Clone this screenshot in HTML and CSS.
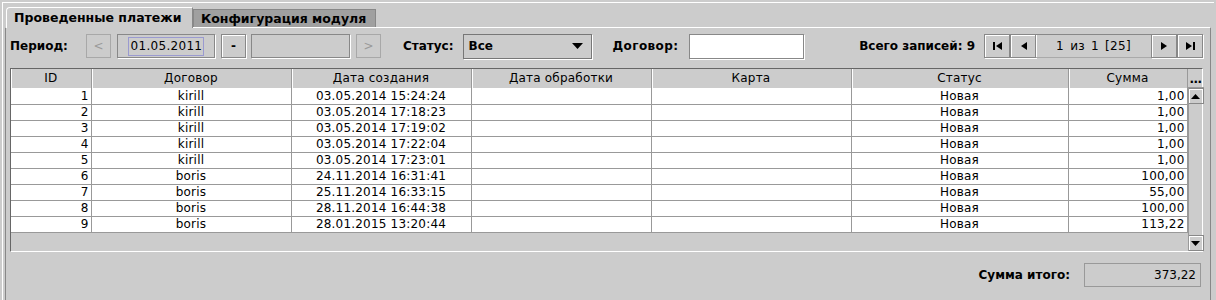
FILE: index.html
```html
<!DOCTYPE html>
<html lang="ru">
<head>
    <meta charset="UTF-8">
    <title>Проведенные платежи</title>
    <link rel="stylesheet" href="styles.css">
</head>
<body>
    <div class="window">
        <div class="tabs">
            <div class="tab active">Проведенные платежи</div>
            <div class="tab">Конфигурация модуля</div>
        </div>

        <div class="panel">
            <!-- filters -->
            <div class="toolbar">
                <span class="label">Период:</span>
                <button class="btn step prev" disabled>&lt;</button>
                <div class="field date"><span class="focus">01.05.2011</span></div>
                <button class="btn dash">-</button>
                <div class="field date-to"></div>
                <button class="btn step next" disabled>&gt;</button>

                <span class="label status-label">Статус:</span>
                <div class="select">
                    <span>Все</span>
                    <svg width="11" height="6" viewBox="0 0 11 6"><path d="M0 0h11L5.5 6z" fill="#000"/></svg>
                </div>

                <span class="label contract-label">Договор:</span>
                <input class="input" type="text">

                <span class="label total-label">Всего записей: 9</span>
                <div class="pager">
                    <button class="btn nav">
                        <svg width="9" height="8" viewBox="0 0 9 8"><path d="M0 0h2v8H0zM9 0v8L3 4z" fill="#000"/></svg>
                    </button>
                    <button class="btn nav">
                        <svg width="7" height="8" viewBox="0 0 7 8"><path d="M7 0v8L1 4z" fill="#000"/></svg>
                    </button>
                    <div class="page">1 из 1 [25]</div>
                    <button class="btn nav">
                        <svg width="7" height="8" viewBox="0 0 7 8"><path d="M0 0v8l6-4z" fill="#000"/></svg>
                    </button>
                    <button class="btn nav">
                        <svg width="9" height="8" viewBox="0 0 9 8"><path d="M0 0v8l6-4zM7 0h2v8H7z" fill="#000"/></svg>
                    </button>
                </div>
            </div>

            <!-- payments table -->
            <div class="table-box">
                <div class="grid-head">
                    <table class="grid">
                        <colgroup>
                            <col class="c-id"><col class="c-contract"><col class="c-created"><col class="c-processed">
                            <col class="c-card"><col class="c-status"><col class="c-sum">
                        </colgroup>
                        <tr>
                            <th>ID</th><th>Договор</th><th>Дата создания</th><th>Дата обработки</th>
                            <th>Карта</th><th>Статус</th><th>Сумма</th>
                        </tr>
                    </table>
                </div>
                <div class="corner">...</div>
                <div class="grid-body">
                    <table class="grid" id="rows">
                        <colgroup>
                            <col class="c-id"><col class="c-contract"><col class="c-created"><col class="c-processed">
                            <col class="c-card"><col class="c-status"><col class="c-sum">
                        </colgroup>
                    </table>
                </div>
                <div class="vscroll">
                    <div class="sbtn">
                        <svg width="9" height="5" viewBox="0 0 9 5"><path d="M0 5h9L4.5 0z" fill="#000"/></svg>
                    </div>
                    <div class="track"></div>
                    <div class="sbtn">
                        <svg width="9" height="5" viewBox="0 0 9 5"><path d="M0 0h9L4.5 5z" fill="#000"/></svg>
                    </div>
                </div>
            </div>

            <div class="summary">
                <span class="label">Сумма итого:</span>
                <div class="field total">373,22</div>
            </div>
        </div>
    </div>

    <script>
        // Payments shown in the grid
        const payments = [
            { id: 1, contract: 'kirill', created: '03.05.2014 15:24:24', sum: '1,00' },
            { id: 2, contract: 'kirill', created: '03.05.2014 17:18:23', sum: '1,00' },
            { id: 3, contract: 'kirill', created: '03.05.2014 17:19:02', sum: '1,00' },
            { id: 4, contract: 'kirill', created: '03.05.2014 17:22:04', sum: '1,00' },
            { id: 5, contract: 'kirill', created: '03.05.2014 17:23:01', sum: '1,00' },
            { id: 6, contract: 'boris', created: '24.11.2014 16:31:41', sum: '100,00' },
            { id: 7, contract: 'boris', created: '25.11.2014 16:33:15', sum: '55,00' },
            { id: 8, contract: 'boris', created: '28.11.2014 16:44:38', sum: '100,00' },
            { id: 9, contract: 'boris', created: '28.01.2015 13:20:44', sum: '113,22' }
        ];

        const table = document.getElementById('rows');
        payments.forEach(p => {
            const tr = document.createElement('tr');
            tr.innerHTML = `
                <td class="right">${p.id}</td>
                <td>${p.contract}</td>
                <td>${p.created}</td>
                <td></td>
                <td></td>
                <td>Новая</td>
                <td class="right">${p.sum}</td>
            `;
            table.appendChild(tr);
        });
    </script>
</body>
</html>
```

FILE: styles.css
```css
/* Reset */
* {
    box-sizing: border-box;
}

body {
    margin: 0;
    height: 300px;
    overflow: hidden;
    background-color: #cccccc;
    color: #000;
    font-family: "DejaVu Sans", sans-serif;
    font-size: 12px;
}

button {
    font-family: inherit;
    padding: 0;
    margin: 0;
}

.window {
    margin: 2px 2px 0 2px;
    height: 298px;
    padding: 4px 0 0 2px;
    border-top: 1px solid #fff;
    border-left: 1px solid #fff;
    display: flex;
    flex-direction: column;
}

/* Tabs */
.tabs {
    display: flex;
    align-items: flex-end;
    padding-left: 1px;
    height: 20px;
    position: relative;
    z-index: 1;
}

.tab {
    height: 18px;
    padding: 0 7px 0 7px;
    background-color: #a0a0a0;
    border: 1px solid #888;
    border-bottom: none;
    font-weight: bold;
    font-size: 12.5px;
    line-height: 17px;
    white-space: nowrap;
}

.tab.active {
    height: 21px;
    width: 187px;
    margin-bottom: -1px;
    background-color: #cccccc;
    border-color: #fff #888 #ccc #fff;
    border-top-left-radius: 4px;
    line-height: 19px;
}

.tab + .tab {
    width: 183px;
}

/* Main panel */
.panel {
    flex: 1;
    border-top: 1px solid #fff;
    border-left: 1px solid #888;
    border-right: 1px solid #888;
    margin-right: 3px;
    display: flex;
    flex-direction: column;
}

.label {
    font-weight: bold;
    font-size: 12px;
    white-space: nowrap;
}

/* Toolbar */
.toolbar {
    display: flex;
    align-items: center;
    height: 24px;
    margin-top: 6px;
    padding-left: 4px;
}

.btn {
    width: 25px;
    height: 24px;
    background-color: #cccccc;
    border: 1px solid #888;
    box-shadow: inset 1px 1px #fff, 1px 1px #fff;
    display: flex;
    align-items: center;
    justify-content: center;
}

.btn.step {
    border-color: #a8a8a8;
    box-shadow: none;
    color: #9a9a9a;
    font-size: 12px;
}

.btn.prev {
    margin-left: 18px;
}

.btn.next {
    margin-left: 6px;
}

.btn.dash {
    margin-left: 6px;
    font-weight: bold;
    font-size: 12px;
}

.field {
    height: 24px;
    border: 1px solid #888;
    box-shadow: 1px 1px #fff;
    background-color: #cccccc;
    display: flex;
    align-items: center;
}

.field.date {
    width: 98px;
    margin-left: 6px;
    justify-content: center;
    font-size: 12px;
}

.field.date .focus {
    border: 1px solid #9a9ad0;
    padding: 1px 1px 1px 2px;
    line-height: 15px;
    letter-spacing: 0.3px;
}

.field.date-to {
    width: 99px;
    margin-left: 5px;
}

.status-label {
    margin-left: 22px;
}

.select {
    width: 129px;
    height: 25px;
    margin-left: 10px;
    border: 1px solid #777;
    box-shadow: 1px 1px #fff;
    display: flex;
    align-items: center;
    justify-content: space-between;
    padding: 0 8px 0 4px;
    font-weight: bold;
    font-size: 12px;
}

.contract-label {
    margin-left: 20px;
    letter-spacing: 0.4px;
}

.input {
    width: 115px;
    height: 25px;
    margin: 0 0 0 11px;
    border: 1px solid #888;
    box-shadow: 1px 1px #fff;
    background-color: #fff;
    outline: none;
}

.total-label {
    margin-left: auto;
}

.pager {
    display: flex;
    margin-left: 9px;
    margin-right: 7px;
}

.btn.nav {
    width: 26px;
}

.page {
    width: 115px;
    height: 24px;
    border-top: 1px solid #888;
    border-bottom: 1px solid #aaa;
    display: flex;
    align-items: center;
    justify-content: center;
    font-size: 12px;
    word-spacing: 2px;
    letter-spacing: 0.3px;
}

/* Table */
.table-box {
    margin: 10px 7px 0 4px;
    height: 184px;
    border: 1px solid #666;
    border-right-color: #fff;
    border-bottom-color: #fff;
    display: grid;
    grid-template-columns: 1fr 16px;
    grid-template-rows: 19px 1fr;
}

.grid {
    width: 100%;
    table-layout: fixed;
    border-collapse: collapse;
    letter-spacing: 0.2px;
}

.c-id { width: 80px; }
.c-contract { width: 200px; }
.c-created { width: 180px; }
.c-processed { width: 180px; }
.c-card { width: 200px; }
.c-status { width: 217px; }
.c-sum { width: 119px; }

.grid th {
    height: 19px;
    padding: 0;
    font-weight: normal;
    background-color: #cccccc;
    border-right: 1px solid #999;
    border-bottom: 1px solid #999;
    box-shadow: inset 1px 0 #fff;
}

.grid td {
    height: 16px;
    padding: 0 2px;
    text-align: center;
    background-color: #fff;
    border-right: 1px solid #999;
    border-bottom: 1px solid #999;
    line-height: 14px;
    white-space: nowrap;
}

.grid td.right {
    text-align: right;
}

.grid-body {
    overflow: hidden;
    background-color: #cccccc;
}

.corner {
    border-bottom: 1px solid #999;
    font-weight: bold;
    text-align: center;
    line-height: 20px;
    letter-spacing: -0.5px;
}

.vscroll {
    display: flex;
    flex-direction: column;
    border-left: 1px solid #999;
}

.sbtn {
    height: 16px;
    border: 1px solid #888;
    border-left: none;
    box-shadow: inset 1px 1px #fff;
    display: flex;
    align-items: center;
    justify-content: center;
}

.track {
    flex: 1;
}

/* Summary */
.summary {
    display: flex;
    align-items: center;
    justify-content: flex-end;
    margin-top: 11px;
    padding-right: 9px;
}

.field.total {
    width: 117px;
    margin-left: 14px;
    justify-content: flex-end;
    padding-right: 4px;
    border-color: #999;
    box-shadow: none;
    font-size: 12px;
}
```
